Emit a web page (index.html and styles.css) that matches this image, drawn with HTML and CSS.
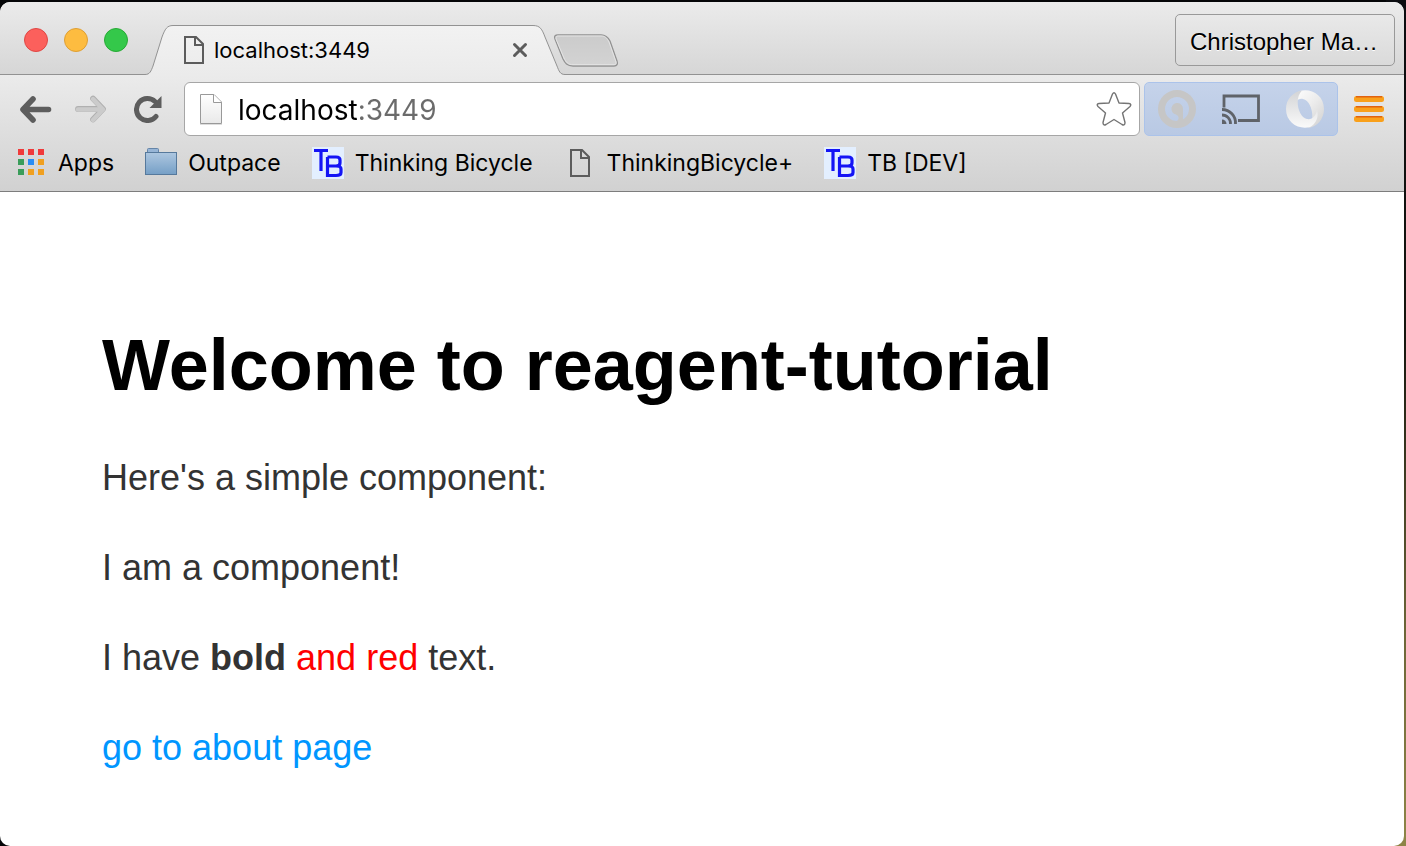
FILE: index.html
```html
<!DOCTYPE html>
<html lang="en">
<head>
<meta charset="utf-8">
<meta name="viewport" content="width=device-width, initial-scale=1">
<title>localhost:3449</title>
<link rel="stylesheet" href="styles.css">
</head>
<body>
<svg width="0" height="0" class="defs" aria-hidden="true">
  <defs>
    <symbol id="page" viewBox="0 0 20 28"><path d="M1 1H12L19 8V27H1Z" fill="none" stroke="#5c5c5c" stroke-width="2"/><path d="M11 1V9H19" fill="none" stroke="#5c5c5c" stroke-width="2"/></symbol>
    <symbol id="tb" viewBox="0 0 32 32"><path d="M0 0H32V32H0Z" fill="#e3efff"/><path d="M2 3.500H16M9 3V24" fill="none" stroke="#1414f5" stroke-width="3.200"/><path d="M15.500 10H24Q28 10 28 13V16Q28 19 24 19H16M24 19Q29 19 29 22V25.500Q29 28.500 24 28.500H15.500V10" fill="none" stroke="#1414f5" stroke-width="3.200"/></symbol>
  </defs>
</svg>
<div class="window">
  <header class="tabstrip">
    <div class="lights">
      <button class="light red" aria-label="Close window"></button>
      <button class="light yellow" aria-label="Minimize window"></button>
      <button class="light green" aria-label="Zoom window"></button>
    </div>
    <div class="tab">
      <svg class="edge" width="28" height="50" viewBox="0 0 28 50" aria-hidden="true"><path d="M0 50V49.500C5 49.500 6 46 8 41L17 12C20 4 22 .500 28 .500V50Z" fill="url(#tabfill)"/><path d="M0 49.500C5 49.500 6 46 8 41L17 12C20 4 22 .500 28 .500" fill="none" stroke="#929292"/><defs><linearGradient id="tabfill" x1="0" y1="0" x2="0" y2="1"><stop offset="0" stop-color="#f2f2f2"/><stop offset="1" stop-color="#ebebeb"/></linearGradient></defs></svg>
      <div class="tab-body">
        <svg width="20" height="28" aria-hidden="true"><use href="#page"/></svg>
        <span class="tab-title">localhost:3449</span>
        <button class="close" aria-label="Close tab"><svg width="16" height="16" viewBox="0 0 16 16"><path d="M2.500 2.500L13.500 13.500M13.500 2.500L2.500 13.500" stroke="#5c5c5c" stroke-width="3" stroke-linecap="round"/></svg></button>
      </div>
      <svg class="edge" width="32" height="50" viewBox="0 0 32 50" aria-hidden="true"><path d="M32 50V49.500C27 49.500 26 46 24 41L12 12C9 4 7 .500 0 .500V50Z" fill="url(#tabfill)"/><path d="M32 49.500C27 49.500 26 46 24 41L12 12C9 4 7 .500 0 .500" fill="none" stroke="#929292"/></svg>
    </div>
    <button class="new-tab" aria-label="New tab"><svg width="64" height="33" viewBox="0 0 64 33"><defs><linearGradient id="nt" x1="0" y1="0" x2="0" y2="1"><stop offset="0" stop-color="#cbcbcb"/><stop offset="1" stop-color="#d3d3d3"/></linearGradient></defs><path d="M4 .800H47C52 .800 54 3 56 7L63 27C64 30 63 32 60 32H19C13 32 11 29 9 25L1 5C0 2 1 .800 4 .800Z" fill="url(#nt)" stroke="#929292" stroke-width="1.300"/><path d="M4 2H47C51 2 53 4 55 8L62 28C62 30 62 30.700 60 30.700H19C14 30.700 12 28 10 24L2 5C2 3 2 2 4 2Z" fill="none" stroke="#e4e4e4"/></svg></button>
    <button class="profile">Christopher Ma…</button>
  </header>

  <div class="chrome">
    <div class="toolbar">
      <nav class="nav" aria-label="History">
        <button aria-label="Back"><svg width="32" height="28" viewBox="0 0 32 28"><path d="M28.500 14.500H4M13 4L3 14.500L13 25" fill="none" stroke="#5d5d5d" stroke-width="5.600" stroke-linecap="round" stroke-linejoin="round"/></svg></button>
        <button aria-label="Forward"><svg width="32" height="28" viewBox="0 0 32 28"><path d="M3 14H27M18 3.500L28 14L18 24.500" fill="none" stroke="#b0b0b0" stroke-width="5.800" stroke-linecap="round" stroke-linejoin="round"/><path d="M3 14.500H27M18 4L28 14.500L18 25" fill="none" stroke="#cbcbcb" stroke-width="4.400" stroke-linecap="round" stroke-linejoin="round"/></svg></button>
        <button aria-label="Reload"><svg width="28" height="28" viewBox="0 0 28 28"><path d="M22 21.500A11 11 0 1 1 21 6.500" fill="none" stroke="#5d5d5d" stroke-width="5" stroke-linecap="round"/><path d="M27.500 1V13H15.500Z" fill="#5d5d5d"/></svg></button>
      </nav>
      <div class="omnibox">
        <svg width="24" height="34" viewBox="0 0 24 34" aria-hidden="true"><defs><linearGradient id="pg" x1="0" y1="0" x2="0" y2="1"><stop offset="0" stop-color="#fff"/><stop offset="1" stop-color="#e9e9e9"/></linearGradient></defs><path d="M1 32.500H23" stroke="#ddd"/><path d="M1.500 2.500H15L22.500 10V31.500H1.500Z" fill="url(#pg)" stroke="#999"/><path d="M14.500 2.500V10.500H22.500" fill="#fff" stroke="#999"/></svg>
        <input class="url" type="text" value="localhost:3449" aria-label="Address" spellcheck="false">
        <button class="star" aria-label="Bookmark this page"><svg width="36" height="36" viewBox="0 0 36 36"><path d="M16.500 3Q18 .500 19.500 3L23 12L33 12.500Q36 13 34 15.500L26.500 22L29 31.500Q29 35 26 33.500L18 28.500L10 33.500Q7 35 7 31.500L9.500 22L2 15.500Q0 13 3 12.500L13 12Z" fill="#fff" stroke="#747474" stroke-width="1.400" stroke-linejoin="round"/></svg></button>
      </div>
      <div class="extensions">
        <button aria-label="Authentication extension"><svg width="40" height="40" viewBox="0 0 40 40"><circle cx="20" cy="20" r="15.500" fill="none" stroke="#c6c6c6" stroke-width="7"/><path d="M19 25.500A5.800 5.800 0 1 1 26 20V32H20C22.500 30 22 27 19 25.500Z" fill="#c6c6c6"/></svg></button>
        <button aria-label="Cast"><svg width="40" height="32" viewBox="0 0 40 32"><path d="M3 14.500V3H37.500V27.500H17" fill="none" stroke="#5f6369" stroke-width="2.800"/><path d="M1 16.500A13.500 13.500 0 0 1 14.500 31M1 22A8.500 8.500 0 0 1 9.500 31" fill="none" stroke="#5f6369" stroke-width="2.800"/><path d="M1 26.500A4.500 4.500 0 0 1 5.500 31H1Z" fill="#5f6369"/></svg></button>
        <button aria-label="JSON viewer"><svg width="40" height="40" viewBox="0 0 40 40"><defs><linearGradient id="ja" x1="0" y1="0" x2="1" y2="1"><stop offset="0" stop-color="#fff"/><stop offset=".5" stop-color="#ececec"/><stop offset="1" stop-color="#cfcfcf"/></linearGradient><linearGradient id="jb" x1="0" y1="1" x2="0" y2="0"><stop offset="0" stop-color="#fafafa"/><stop offset="1" stop-color="#d3d4d6"/></linearGradient></defs><path d="M15 2C26 -1 39 6 39 20C39 30 32 38 23 39C31 31 27 12 18 10C13 9 9 13 8 19C6 12 9 5 15 2Z" fill="url(#ja)"/><path d="M25 38C14 41 1 34 1 20C1 10 8 3 17 1.500C9 9 13 28 22 30C27 31 31 27 32 21C34 28 31 35 25 38Z" fill="url(#jb)"/></svg></button>
      </div>
      <button class="menu" aria-label="Menu"><svg width="30" height="26" viewBox="0 0 30 26"><g fill="#f9a01b"><rect width="30" height="6" rx="2.500"/><rect y="10" width="30" height="6" rx="2.500"/><rect y="20" width="30" height="6" rx="2.500"/></g><path d="M2 .700H28M2 10.700H28M2 20.700H28" stroke="#e2620f" stroke-width="1.400"/></svg></button>
    </div>
    <nav class="bookmarks" aria-label="Bookmarks">
      <a href="#"><svg width="32" height="32" viewBox="0 0 32 32" aria-hidden="true"><path d="M3 2h6v6h-6zM13 2h6v6h-6zM23 2h6v6h-6z" fill="#f03a3a"/><path d="M3 12h6v6h-6zM3 22h6v6h-6z" fill="#3a9d5a"/><path d="M13 12h6v6h-6z" fill="#2a8df4"/><path d="M23 12h6v6h-6zM13 22h6v6h-6zM23 22h6v6h-6z" fill="#f0a020"/></svg>Apps</a>
      <a href="#"><svg width="32" height="32" viewBox="0 0 32 32" aria-hidden="true"><defs><linearGradient id="fd" x1="0" y1="0" x2="0" y2="1"><stop offset="0" stop-color="#aec7e0"/><stop offset="1" stop-color="#759fc6"/></linearGradient></defs><path d="M2.500 6V2.500Q2.500 1.500 3.500 1.500H12.500Q13.500 1.500 13.500 2.500V6" fill="#97b5d6" stroke="#6585a8"/><rect x=".5" y="5.500" width="31" height="22" fill="url(#fd)" stroke="#56799c"/></svg>Outpace</a>
      <a href="#"><svg width="32" height="32" aria-hidden="true"><use href="#tb"/></svg>Thinking Bicycle</a>
      <a href="#"><svg width="32" height="28" viewBox="0 0 32 28" aria-hidden="true"><use href="#page" x="6" width="20" height="28"/></svg>ThinkingBicycle+</a>
      <a href="#"><svg width="32" height="32" aria-hidden="true"><use href="#tb"/></svg>TB [DEV]</a>
    </nav>
  </div>

  <main class="content">
    <h1>Welcome to reagent-tutorial</h1>
    <p>Here's a simple component:</p>
    <p>I am a component!</p>
    <p>I have <strong>bold</strong> <span class="red-text">and red</span> text.</p>
    <p><a href="#about">go to about page</a></p>
  </main>
</div>
</body>
</html>
```

FILE: styles.css
```css
* { box-sizing: border-box; }

body {
  margin: 0;
  min-height: 100vh;
  padding: 2px 2px 0 0;
  display: flex;
  background: linear-gradient(#0b0c10 0, #16160f 40%, #6d6638 75%, #8e8547 100%) right / 20px 100% no-repeat, #050608;
  font-family: "Liberation Sans", Arial, sans-serif;
}

.defs { position: absolute; }

svg { display: block; flex: none; }

button {
  margin: 0;
  padding: 0;
  border: 0;
  background: none;
  color: inherit;
  font: inherit;
}

.window {
  flex: 1;
  min-width: 0;
  display: flex;
  flex-direction: column;
  border-radius: 10px;
  overflow: hidden;
  background: #fff;
}

.tabstrip {
  display: flex;
  align-items: flex-end;
  height: 73px;
  padding-right: 9px;
  background: linear-gradient(#ebebeb, #d6d6d6);
  border-bottom: 1px solid #929292;
}

.lights {
  display: flex;
  gap: 16px;
  padding: 0 17px 22px 24px;
}

.light {
  width: 24px;
  height: 24px;
  border-radius: 50%;
  border: 1px solid;
}

.red { background: #fc605c; border-color: #df4744; }
.yellow { background: #fdbc40; border-color: #de9f34; }
.green { background: #34c84a; border-color: #27aa35; }

.tab {
  display: flex;
  height: 50px;
  margin-bottom: -1px;
}

.tab-body {
  display: flex;
  align-items: center;
  width: 360px;
  padding: 0 5px 2px 11px;
  border-top: 1px solid #929292;
  background: linear-gradient(#f2f2f2, #ebebeb);
}

.tab-title {
  flex: 1;
  margin-left: 10px;
  font-size: 22px;
  line-height: 30px;
}

.tab-title,
.url,
.bookmarks { font-family: Inter, Roboto, sans-serif; }

.new-tab { margin: 0 auto 7px -11px; }

.profile {
  height: 52px;
  width: 220px;
  margin-bottom: 8px;
  padding: 4px 2px 0 0;
  border: 1px solid #999;
  border-radius: 5px;
  background: linear-gradient(#e9e9e9, #dadada);
  color: #000;
  font-size: 24px;
  white-space: nowrap;
  text-shadow: 0 1px 0 #fff;
}

.chrome {
  padding-top: 7px;
  background: linear-gradient(#ebebeb, #d1d1d1);
  border-bottom: 1px solid #7d7d7d;
}

.toolbar {
  display: flex;
  align-items: center;
  padding: 0 20px;
}

.nav {
  display: flex;
  gap: 23px;
  padding-right: 23px;
}

.nav button:last-child { margin-left: 4px; }

.omnibox {
  flex: 1;
  min-width: 0;
  display: flex;
  align-items: center;
  height: 54px;
  margin-left: -1px;
  padding: 0 7px 0 14px;
  border: 1px solid #a6a6a6;
  border-radius: 6px;
  background: #fff;
}

.url {
  flex: 1;
  min-width: 0;
  height: 44px;
  margin: 0 0 0 15px;
  padding: 2px 0 0;
  border: 0;
  outline: 0;
  font-size: 28px;
  color: #000;
  background: linear-gradient(90deg, #000 119px, #6b6b6b 119px);
  background-clip: text;
  -webkit-background-clip: text;
  -webkit-text-fill-color: transparent;
}

.extensions {
  display: flex;
  align-items: center;
  justify-content: space-between;
  width: 194px;
  height: 54px;
  margin: 0 16px 0 4px;
  padding: 0 12px;
  border: 1px solid #abc3ea;
  border-radius: 5px;
  background: linear-gradient(#c5d3ea, #b9c9e4);
}

.bookmarks {
  display: flex;
  align-items: center;
  gap: 31px;
  height: 55px;
  padding: 0 15px 1px;
  font-size: 23px;
  white-space: nowrap;
}

.bookmarks a {
  display: flex;
  align-items: center;
  gap: 11px;
  color: #000;
  text-decoration: none;
}

.content {
  padding: 128px 102px 0;
  color: #333;
  font-size: 36px;
  line-height: 54px;
}

h1 {
  margin: 0 0 41px;
  color: #000;
  font-size: 72px;
  line-height: 90px;
}

p { margin: 0 0 36px; }

.content a { color: #0096ff; text-decoration: none; }

.red-text { color: #f00; }
```
